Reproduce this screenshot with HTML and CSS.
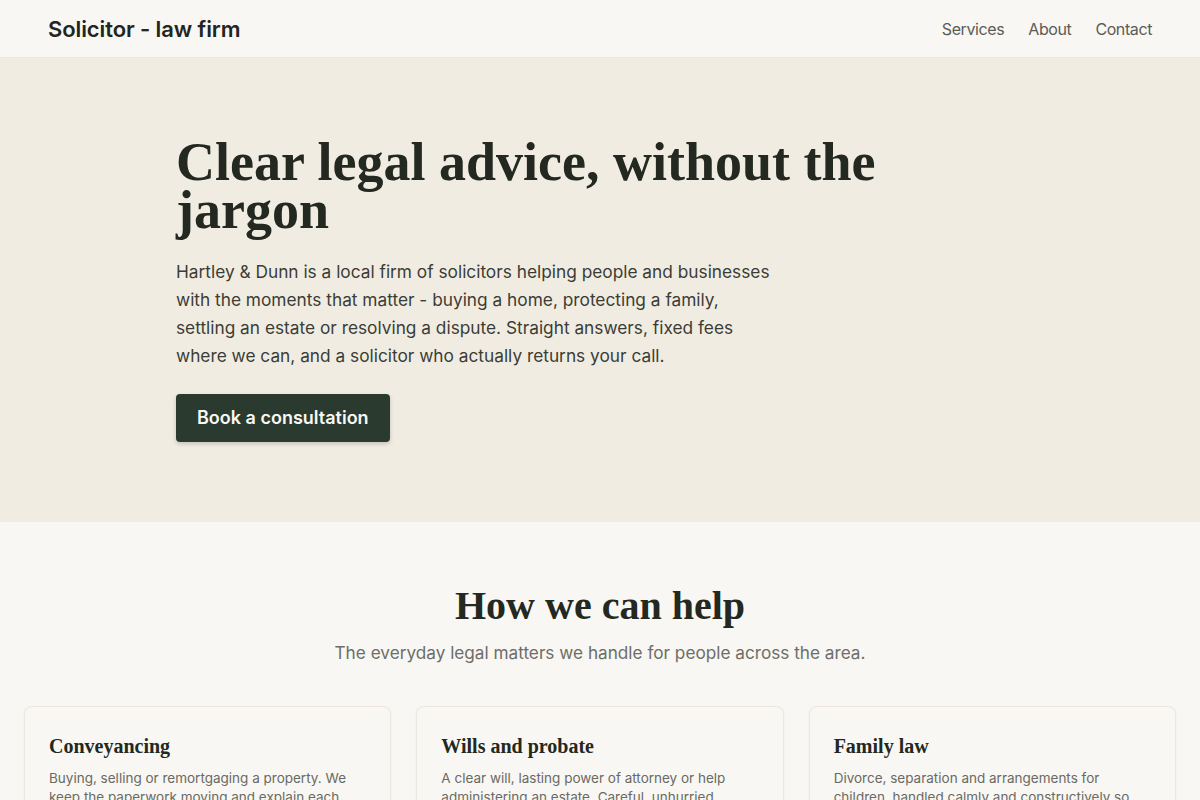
FILE: index.html
```html
<!DOCTYPE html>
<html lang="en">
<head>
    <meta charset="UTF-8">
    <meta name="viewport" content="width=device-width, initial-scale=1.0">
    <title>Solicitor - law firm</title>
    <link rel="stylesheet" href="styles.css">
</head>
<body>
    <!-- Top bar -->
    <header class="site-header">
        <a class="brand" href="#">Solicitor - law firm</a>
        <nav class="main-nav">
            <a href="#services">Services</a>
            <a href="#about">About</a>
            <a href="#contact">Contact</a>
        </nav>
    </header>

    <!-- Hero -->
    <section class="hero">
        <div class="hero-inner">
            <h1>Clear legal advice, without the jargon</h1>
            <p class="lead">Hartley &amp; Dunn is a local firm of solicitors helping people and businesses with the moments that matter - buying a home, protecting a family, settling an estate or resolving a dispute. Straight answers, fixed fees where we can, and a solicitor who actually returns your call.</p>
            <a class="btn" href="#contact">Book a consultation</a>
        </div>
    </section>

    <!-- Services -->
    <section class="services" id="services">
        <h2>How we can help</h2>
        <p class="section-sub">The everyday legal matters we handle for people across the area.</p>

        <div class="cards">
            <div class="card">
                <h3>Conveyancing</h3>
                <p>Buying, selling or remortgaging a property. We keep the paperwork moving and explain each step before it happens, so nothing comes as a surprise.</p>
            </div>
            <div class="card">
                <h3>Wills and probate</h3>
                <p>A clear will, lasting power of attorney or help administering an estate. Careful, unhurried advice at a time when it matters most to your family.</p>
            </div>
            <div class="card">
                <h3>Family law</h3>
                <p>Divorce, separation and arrangements for children, handled calmly and constructively so you can focus on what comes next.</p>
            </div>
        </div>
    </section>
</body>
</html>
```

FILE: styles.css
```css
body {
    margin: 0;
    font-family: 'Inter', 'Noto Sans', sans-serif;
    background-color: #f8f7f3;
    color: #23271f;
}

a {
    text-decoration: none;
    color: inherit;
}

/* header */
.site-header {
    height: 57px;
    display: flex;
    align-items: center;
    justify-content: space-between;
    padding: 0 48px;
    background-color: #f8f7f3;
    border-bottom: 1px solid #ebe7df;
}

.brand {
    font-size: 22px;
    font-weight: 600;
    color: #22261f;
    letter-spacing: -0.1px;
}

.main-nav {
    display: flex;
    gap: 24px;
}

.main-nav a {
    font-size: 16px;
    letter-spacing: -0.4px;
    color: #5c5c57;
}

/* hero */
.hero {
    background-color: #f1ece2;
    padding: 80px 0;
}

.hero-inner {
    max-width: 848px;
    margin: 0 auto;
}

.hero h1 {
    font-family: 'Liberation Serif', serif;
    font-weight: 700;
    font-size: 54px;
    line-height: 48px;
    margin: 0 0 24px;
    color: #232820;
    max-width: 720px;
}

.lead {
    font-size: 17.3px;
    line-height: 28px;
    color: #3a3d36;
    max-width: 596px;
    margin: 0 0 24px;
}

.btn {
    display: inline-block;
    background-color: #2a3a2f;
    color: #f8f7f3;
    font-size: 18px;
    line-height: 22px;
    font-weight: 600;
    padding: 13px 21px;
    border-radius: 4px;
    box-shadow: 0 2px 4px rgba(0, 0, 0, 0.18);
}

/* services */
.services {
    padding: 59px 24px;
    text-align: center;
}

.services h2 {
    font-family: 'Liberation Serif', serif;
    font-weight: 700;
    font-size: 40px;
    line-height: 50px;
    margin: 0 0 11px;
    color: #232820;
}

.section-sub {
    font-size: 17.2px;
    color: #6e6e68;
    margin: 0 0 43px;
}

.cards {
    display: grid;
    grid-template-columns: repeat(3, 1fr);
    gap: 25px;
    text-align: left;
}

.card {
    background-color: #f8f7f3;
    border: 1px solid #ece8e0;
    border-radius: 8px;
    padding: 24px 24px 20px;
    box-shadow: 0 1px 3px rgba(0, 0, 0, 0.05);
}

.card h3 {
    font-family: 'Liberation Serif', serif;
    font-weight: 700;
    font-size: 20px;
    line-height: 26px;
    margin: 2px 0 10px;
    color: #232820;
}

.card p {
    font-size: 13.5px;
    line-height: 19px;
    color: #6a6a64;
    margin: 0;
}
```
